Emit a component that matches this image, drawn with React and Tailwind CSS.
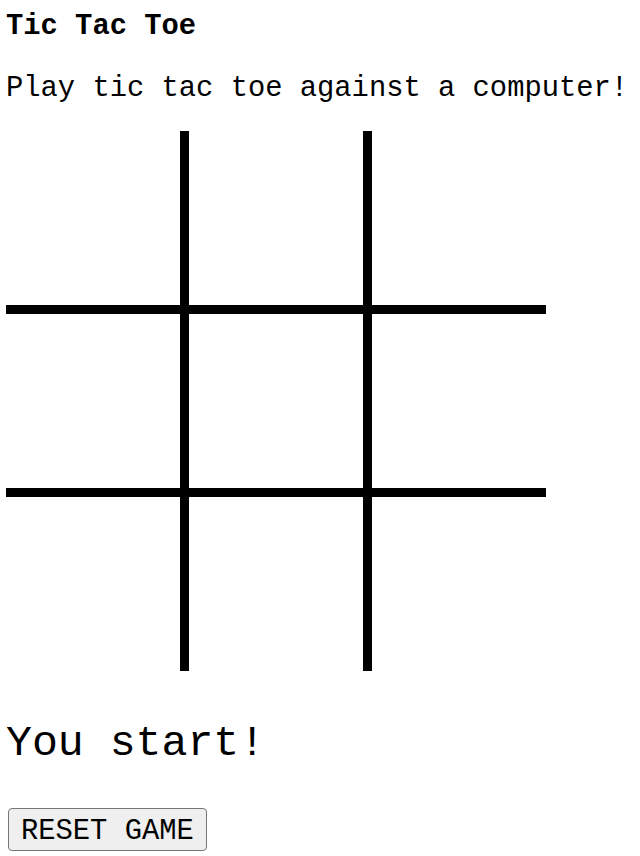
const cells = [0, 1, 2, 3, 4, 5, 6, 7, 8];

function Cell({ index }) {
  const col = index % 3;
  const row = Math.floor(index / 3);
  const right = col < 2;
  const bottom = row < 2;
  return (
    <div
      className={`bg-white border-black ${right ? "w-[183px] border-r-[9px]" : "w-[174px]"} ${
        bottom ? "h-[183px] border-b-[9px]" : "h-[174px]"
      }`}
    />
  );
}

export default function App() {
  return (
    <div className="min-h-screen bg-white text-black font-['Liberation_Mono','Courier_New',monospace] px-[6px] pt-[10px]">
      <h1 className="text-[28.8px] leading-[33px] font-bold">Tic Tac Toe</h1>
      <p className="text-[28.8px] leading-[33px] mt-[29px]">
        Play tic tac toe against a computer!
      </p>
      <div className="mt-[26px] grid grid-cols-[183px_183px_174px] w-[540px]">
        {cells.map((i) => (
          <Cell key={i} index={i} />
        ))}
      </div>
      <h2 className="text-[43.2px] leading-[49px] mt-[48px]">You start!</h2>
      <button className="mt-[40px] ml-[2px] px-[12px] pt-[3px] h-[43px] text-[28.8px] leading-[33px] bg-[#efefef] border border-[#767676] rounded-[4px]">
        RESET GAME
      </button>
    </div>
  );
}
